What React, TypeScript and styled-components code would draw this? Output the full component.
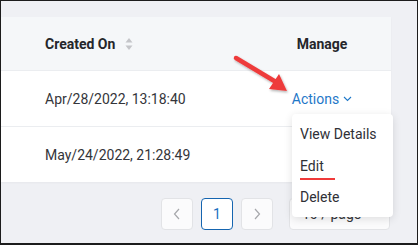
import styled, { createGlobalStyle } from "styled-components";

const GlobalStyle = createGlobalStyle`
  html, body {
    margin: 0;
    padding: 0;
  }
  body {
    font-family: Roboto, "Liberation Sans", Arial, sans-serif;
  }
`;

const Frame = styled.div`
  position: relative;
  box-sizing: border-box;
  width: 418px;
  height: 245px;
  border: 1px solid #1c1c1c;
  border-bottom-width: 2px;
  background: #eff0f4;
  overflow: hidden;
  display: flex;
  flex-direction: column;
`;

const Card = styled.div`
  margin-top: 16px;
  width: 390px;
  background: #ffffff;
  box-shadow: 0 1px 2px rgba(0, 0, 0, 0.04);
`;

const Row = styled.div<{ $head?: boolean }>`
  display: grid;
  grid-template-columns: 1fr 138px;
  align-items: center;
  height: ${(p) => (p.$head ? "53px" : "55px")};
  background: ${(p) => (p.$head ? "#f5f7f9" : "#ffffff")};
  border-top: ${(p) => (p.$head ? "none" : "1px solid #ebedf0")};
  font-size: 14px;
  font-weight: ${(p) => (p.$head ? 700 : 400)};
  color: ${(p) => (p.$head ? "#25262b" : "#34353a")};
`;

const Cell = styled.div<{ $center?: boolean }>`
  display: flex;
  align-items: center;
  justify-content: ${(p) => (p.$center ? "center" : "flex-start")};
  padding-left: ${(p) => (p.$center ? "0" : "44px")};
  gap: 10px;
`;

const SortIcon = styled.svg`
  width: 8px;
  height: 14px;
`;

const ActionsLink = styled.span`
  display: inline-flex;
  align-items: center;
  gap: 4px;
  color: #1f78c8;
  font-size: 14px;
`;

const Pager = styled.div`
  display: flex;
  align-items: center;
  justify-content: flex-end;
  margin-top: 16px;
  padding-right: 27px;
  gap: 8px;
`;

const PageButton = styled.div<{ $active?: boolean }>`
  box-sizing: border-box;
  width: 32px;
  height: 32px;
  display: flex;
  align-items: center;
  justify-content: center;
  border-radius: 4px;
  border: 1px solid ${(p) => (p.$active ? "#1565b0" : "#e2e3e6")};
  background: ${(p) => (p.$active ? "#ffffff" : "#fbfbfc")};
  color: ${(p) => (p.$active ? "#1a6fbf" : "#a6a7ab")};
  font-size: 14px;
`;

const SizeSelect = styled.div`
  box-sizing: border-box;
  width: 101px;
  height: 32px;
  margin-left: 8px;
  display: flex;
  align-items: center;
  padding-left: 12px;
  border-radius: 4px;
  border: 1px solid #e2e3e6;
  background: #fbfbfc;
  color: #34353a;
  font-size: 14px;
`;

const Menu = styled.ul`
  position: absolute;
  left: 291px;
  top: 113px;
  width: 101px;
  margin: 0;
  padding: 5px 0 3px;
  list-style: none;
  background: #ffffff;
  border-radius: 4px;
  box-shadow: 0 2px 8px rgba(0, 0, 0, 0.12);
`;

const MenuItem = styled.li<{ $marked?: boolean }>`
  position: relative;
  height: 31.5px;
  line-height: 31.5px;
  padding-left: 8px;
  font-size: 14px;
  color: #2f3036;
  white-space: nowrap;

  ${(p) =>
    p.$marked &&
    `
    &::after {
      content: "";
      position: absolute;
      left: 8px;
      top: 27px;
      width: 35px;
      height: 2px;
      background: #f03a3a;
    }
  `}
`;

const Arrow = styled.svg`
  position: absolute;
  left: 226px;
  top: 48px;
  width: 70px;
  height: 50px;
  overflow: visible;
`;

function Chevron({ dir }: { dir: "left" | "right" }) {
  return (
    <svg width="8" height="12" viewBox="0 0 8 12">
      <path
        d={dir === "left" ? "M6 1 L1.5 6 L6 11" : "M2 1 L6.5 6 L2 11"}
        fill="none"
        stroke="#a6a7ab"
        strokeWidth="1.2"
      />
    </svg>
  );
}

export default function App() {
  return (
    <>
      <GlobalStyle />
      <Frame>
        <Card>
          <Row $head>
            <Cell>
              Created On
              <SortIcon viewBox="0 0 8 14">
                <path d="M4 1 L7.5 5.5 L0.5 5.5 Z" fill="#c4c5c9" />
                <path d="M4 13 L7.5 8.5 L0.5 8.5 Z" fill="#c4c5c9" />
              </SortIcon>
            </Cell>
            <Cell $center>Manage</Cell>
          </Row>
          <Row>
            <Cell>Apr/28/2022, 13:18:40</Cell>
            <Cell $center>
              <ActionsLink>
                Actions
                <svg width="9" height="6" viewBox="0 0 9 6">
                  <path d="M1 1 L4.5 4.5 L8 1" fill="none" stroke="#1f78c8" strokeWidth="1.1" />
                </svg>
              </ActionsLink>
            </Cell>
          </Row>
          <Row>
            <Cell>May/24/2022, 21:28:49</Cell>
            <Cell $center />
          </Row>
        </Card>
        <Pager>
          <PageButton>
            <Chevron dir="left" />
          </PageButton>
          <PageButton $active>1</PageButton>
          <PageButton>
            <Chevron dir="right" />
          </PageButton>
          <SizeSelect>10 / page</SizeSelect>
        </Pager>
        <Menu>
          <MenuItem>View Details</MenuItem>
          <MenuItem $marked>Edit</MenuItem>
          <MenuItem>Delete</MenuItem>
        </Menu>
        <Arrow viewBox="0 0 70 50">
          <defs>
            <filter id="sh" x="-20%" y="-20%" width="140%" height="140%">
              <feDropShadow dx="1" dy="1.5" stdDeviation="1" floodColor="#000" floodOpacity="0.3" />
            </filter>
          </defs>
          <g filter="url(#sh)">
            <path d="M9 9 L49 33" stroke="#ee3b3b" strokeWidth="4.5" strokeLinecap="round" />
            <path d="M60 42 L42 40 L52 25 Z" fill="#ee3b3b" />
          </g>
        </Arrow>
      </Frame>
    </>
  );
}
